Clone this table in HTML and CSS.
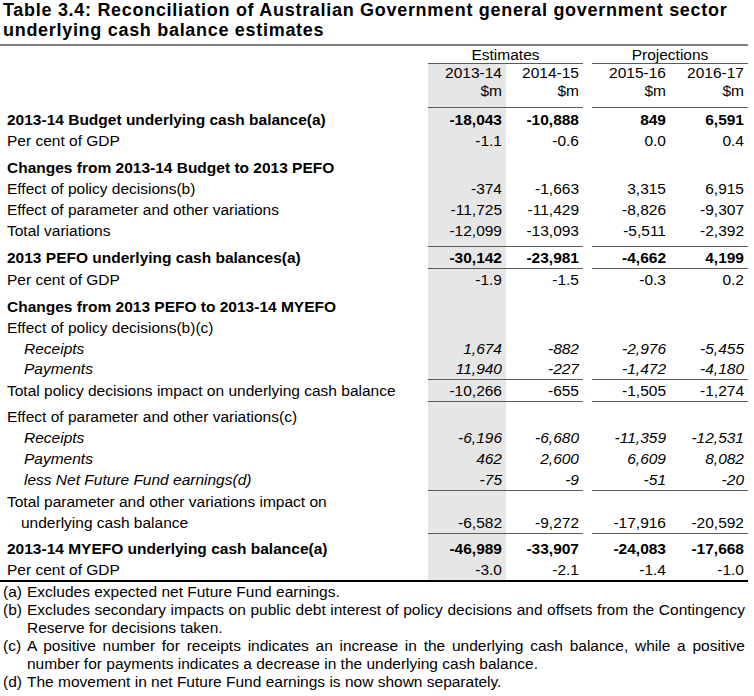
FILE: index.html
```html
<!DOCTYPE html>
<html lang="en">
<head>
<meta charset="utf-8">
<title>Table 3.4</title>
<link rel="stylesheet" href="styles.css">
</head>
<body>
<div class="page">
  <h1 class="title">Table 3.4: Reconciliation of Australian Government general government sector<br>underlying cash balance estimates</h1>
  <table class="tbl">
    <colgroup>
      <col class="c-lbl"><col class="c-num1"><col class="c-num2"><col class="c-gap"><col class="c-num3"><col class="c-num4">
    </colgroup>
    <tr class="h1">
      <td></td><td class="grp-h ul" colspan="2">Estimates</td><td></td><td class="grp-h ul" colspan="2">Projections</td>
    </tr>
    <tr class="h2">
      <td></td><td class="sh">2013-14</td><td>2014-15</td><td></td><td>2015-16</td><td>2016-17</td>
    </tr>
    <tr class="h3">
      <td></td><td class="sh ul">$m</td><td class="ul">$m</td><td></td><td class="ul">$m</td><td class="ul">$m</td>
    </tr>
    <tr class="b pt1">
      <td class="lbl">2013-14 Budget underlying cash balance(a)</td><td class="sh">-18,043</td><td>-10,888</td><td></td><td>849</td><td>6,591</td>
    </tr>
    <tr>
      <td class="lbl">Per cent of GDP</td><td class="sh">-1.1</td><td>-0.6</td><td></td><td>0.0</td><td>0.4</td>
    </tr>
    <tr class="b pt6">
      <td class="lbl">Changes from 2013-14 Budget to 2013 PEFO</td><td class="sh"></td><td></td><td></td><td></td><td></td>
    </tr>
    <tr>
      <td class="lbl">Effect of policy decisions(b)</td><td class="sh">-374</td><td>-1,663</td><td></td><td>3,315</td><td>6,915</td>
    </tr>
    <tr>
      <td class="lbl">Effect of parameter and other variations</td><td class="sh">-11,725</td><td>-11,429</td><td></td><td>-8,826</td><td>-9,307</td>
    </tr>
    <tr class="pb5">
      <td class="lbl">Total variations</td><td class="sh ul">-12,099</td><td class="ul">-13,093</td><td></td><td class="ul">-5,511</td><td class="ul">-2,392</td>
    </tr>
    <tr class="b">
      <td class="lbl">2013 PEFO underlying cash balances(a)</td><td class="sh ul">-30,142</td><td class="ul">-23,981</td><td></td><td class="ul">-4,662</td><td class="ul">4,199</td>
    </tr>
    <tr>
      <td class="lbl">Per cent of GDP</td><td class="sh">-1.9</td><td>-1.5</td><td></td><td>-0.3</td><td>0.2</td>
    </tr>
    <tr class="b pt6">
      <td class="lbl">Changes from 2013 PEFO to 2013-14 MYEFO</td><td class="sh"></td><td></td><td></td><td></td><td></td>
    </tr>
    <tr>
      <td class="lbl">Effect of policy decisions(b)(c)</td><td class="sh"></td><td></td><td></td><td></td><td></td>
    </tr>
    <tr class="i">
      <td class="lbl ind">Receipts</td><td class="sh">1,674</td><td>-882</td><td></td><td>-2,976</td><td>-5,455</td>
    </tr>
    <tr class="i lh20">
      <td class="lbl ind">Payments</td><td class="sh ul">11,940</td><td class="ul">-227</td><td></td><td class="ul">-1,472</td><td class="ul">-4,180</td>
    </tr>
    <tr>
      <td class="lbl">Total policy decisions impact on underlying cash balance</td><td class="sh ul">-10,266</td><td class="ul">-655</td><td></td><td class="ul">-1,505</td><td class="ul">-1,274</td>
    </tr>
    <tr class="pt4">
      <td class="lbl">Effect of parameter and other variations(c)</td><td class="sh"></td><td></td><td></td><td></td><td></td>
    </tr>
    <tr class="i">
      <td class="lbl ind">Receipts</td><td class="sh">-6,196</td><td>-6,680</td><td></td><td>-11,359</td><td>-12,531</td>
    </tr>
    <tr class="i">
      <td class="lbl ind">Payments</td><td class="sh">462</td><td>2,600</td><td></td><td>6,609</td><td>8,082</td>
    </tr>
    <tr class="i">
      <td class="lbl ind">less Net Future Fund earnings(d)</td><td class="sh ul">-75</td><td class="ul">-9</td><td></td><td class="ul">-51</td><td class="ul">-20</td>
    </tr>
    <tr>
      <td class="lbl">Total parameter and other variations impact on</td><td class="sh"></td><td></td><td></td><td></td><td></td>
    </tr>
    <tr>
      <td class="lbl ind2">underlying cash balance</td><td class="sh ul">-6,582</td><td class="ul">-9,272</td><td></td><td class="ul">-17,916</td><td class="ul">-20,592</td>
    </tr>
    <tr class="b pt4">
      <td class="lbl">2013-14 MYEFO underlying cash balance(a)</td><td class="sh">-46,989</td><td>-33,907</td><td></td><td>-24,083</td><td>-17,668</td>
    </tr>
    <tr class="last">
      <td class="lbl">Per cent of GDP</td><td class="sh">-3.0</td><td>-2.1</td><td></td><td>-1.4</td><td>-1.0</td>
    </tr>
  </table>
  <div class="notes">
    <div class="note"><span class="nk">(a)</span><div class="nt">Excludes expected net Future Fund earnings.</div></div>
    <div class="note"><span class="nk">(b)</span><div class="nt"><span class="jl">Excludes secondary impacts on public debt interest of policy decisions and offsets from the Contingency</span>Reserve for decisions taken.</div></div>
    <div class="note"><span class="nk">(c)</span><div class="nt"><span class="jl">A positive number for receipts indicates an increase in the underlying cash balance, while a positive</span>number for payments indicates a decrease in the underlying cash balance.</div></div>
    <div class="note"><span class="nk">(d)</span><div class="nt">The movement in net Future Fund earnings is now shown separately.</div></div>
  </div>
</div>
</body>
</html>
```

FILE: styles.css
```css
html, body {
  margin: 0;
  padding: 0;
  background: #ffffff;
}
body {
  font-family: "Liberation Sans", Arial, Helvetica, sans-serif;
  font-size: 15.5px;
  color: #000000;
}
.page {
  width: 748px;
}
.title {
  margin: 0;
  padding: 0 0 3.6px 3px;
  font-size: 18px;
  letter-spacing: 0.7px;
  font-weight: bold;
  line-height: 20.2px;
  white-space: nowrap;
  border-bottom: 2px solid #808080;
}
.tbl {
  width: 748px;
  table-layout: fixed;
  border-collapse: separate;
  border-spacing: 0;
}
.c-lbl { width: 428px; }
.c-num1 { width: 78px; }
.c-num2 { width: 77px; }
.c-gap { width: 9px; }
.c-num3 { width: 78px; }
.c-num4 { width: 78px; }

.tbl td {
  padding: 0 4px 0 0;
  line-height: 21px;
  text-align: right;
  vertical-align: top;
  white-space: nowrap;
}
.tbl td.lbl {
  text-align: left;
  padding-left: 7px;
}
.tbl td.ind { padding-left: 24px; }
.tbl td.ind2 { padding-left: 21px; }
.tbl td.sh { background: #e6e6e6; }
.tbl td.ul { border-bottom: 1px solid #5a5a5a; }

.tbl .h1 td { line-height: 17.4px; }
.tbl .h1 td.grp-h { text-align: center; padding-right: 0; }
.tbl .h2 td { line-height: 17.4px; }
.tbl .h3 td { line-height: 17.4px; padding-bottom: 8px; }

.tbl .b td { font-weight: bold; }
.tbl .i td { font-style: italic; }
.tbl .pt1 td { padding-top: 1px; }
.tbl .pt4 td { padding-top: 4px; }
.tbl .pt6 td { padding-top: 6px; }
.tbl .pb5 td { padding-bottom: 5px; }
.tbl .lh20 td { line-height: 20px; }
.tbl .last td { border-bottom: 2px solid #000000; }

.notes {
  padding-top: 1px;
  width: 745px;
}
.note {
  display: grid;
  grid-template-columns: 27px 1fr;
  line-height: 18px;
}
.nk {
  padding-left: 3px;
}
.jl {
  display: block;
  text-align: justify;
  text-align-last: justify;
}
```
